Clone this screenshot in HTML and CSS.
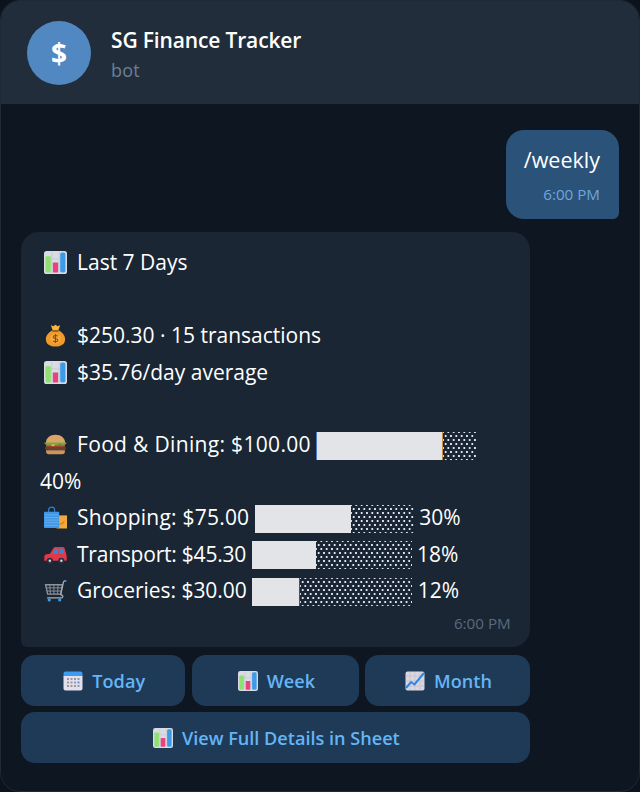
FILE: index.html
```html
<!DOCTYPE html>
<html lang="en">
<head>
<meta charset="utf-8">
<title>SG Finance Tracker</title>
<link rel="stylesheet" href="styles.css">
</head>
<body>
<svg class="defs" width="0" height="0" aria-hidden="true">
  <defs>
    <symbol id="e-chart" viewBox="0 0 22 22">
      <rect x="0" y="0" width="22" height="22" rx="2.5" fill="#d9dce3"/>
      <path d="M7.5 1v20M14.5 1v20M1 7.5h20M1 14.5h20" stroke="#c3c6ce" stroke-width="0.7"/>
      <rect x="1.500" y="5" width="5" height="15.500" rx="1" fill="#8fe070"/>
      <rect x="8.500" y="11" width="5" height="9.500" rx="0.6" fill="#e8437f"/>
      <rect x="15.500" y="1.500" width="5" height="19" rx="1.600" fill="#3c9be8"/>
    </symbol>
    <symbol id="e-bag" viewBox="0 0 22 22">
      <path d="M7.6 6.2C3.8 8.4 1.6 11.6 1.8 15c.2 4.4 4 6.500 9.200 6.500s9-2.100 9.200-6.500c.2-3.400-2-6.600-5.800-8.800z" fill="#ef9a2a"/>
      <path d="M7.6 6.2h6.800l-.6 1.500H8.200z" fill="#a8661a"/>
      <path d="M6.6 1.200l2.400 1 2-1.500 2 1.500 2.400-1-1.600 4.600H8.200z" fill="#f5b63c"/>
      <circle cx="11" cy="14" r="5" fill="#f7a93a"/>
      <path d="M13.200 11.600c-.8-.9-4.200-1-4.300.8-.1 2 4.500 1 4.400 3.200-.1 1.800-3.700 1.700-4.600.6M11 9.600v8.600" fill="none" stroke="#8a4b12" stroke-width="1.100"/>
    </symbol>
    <symbol id="e-burger" viewBox="0 0 22 22">
      <path d="M1.800 9.600C1.800 4.600 5.800 1.600 11 1.600s9.200 3 9.200 8z" fill="#dda468"/>
      <path d="M.6 10.400l3.400 2 3-1.300 4 1.600 4-1.600 3 1.300 3.400-2V9.200H.6z" fill="#6caf3d"/>
      <rect x="2" y="11.400" width="18" height="1.800" fill="#e0493c"/>
      <path d="M6 11h5l-2.400 1.800z" fill="#f4c430"/>
      <rect x="1" y="13.200" width="20" height="3" rx="1.400" fill="#6b4030"/>
      <path d="M2 16.400h18v1.600c0 1.600-1.200 2.400-2.800 2.400H4.800C3.200 20.400 2 19.600 2 18z" fill="#cf9458"/>
    </symbol>
    <symbol id="e-shop" viewBox="0 0 22 22">
      <path d="M4.500 6V3.500C4.500 1.900 5.800 1 7.300 1s2.800.9 2.800 2.500V6" fill="none" stroke="#2f7fd0" stroke-width="1.200"/>
      <rect x="12" y="9" width="10" height="12.500" fill="#f2a93b"/>
      <path d="M14.500 18.500l2-2 1 .8 2-3" fill="none" stroke="#b9701a" stroke-width="0.9"/>
      <rect x="0" y="5.500" width="14.500" height="15.500" rx="0.800" fill="#3f97e6"/>
      <path d="M.5 8.500h13.500M.5 11h13.500M.5 13.500h13.500M.5 16h13.500M.5 18.500h13.500" stroke="#6cb4f0" stroke-width="0.800"/>
    </symbol>
    <symbol id="e-car" viewBox="0 0 22 22">
      <path d="M.3 17v-4c0-1.200 1-1.900 2.400-2.200l3-.6L9 4.700c.4-.6 1-.9 1.700-.9h7.400c.8 0 1.400.5 1.600 1.200l1.700 6.100c.2.600.3 1.300.3 2V17z" fill="#e5364b"/>
      <path d="M7.800 10.200l2.800-4.600h3v4.600zM14.800 5.600h3.600l1.200 4.600h-4.800z" fill="#3b88c3"/>
      <circle cx="5.600" cy="17" r="3" fill="#2a2f38"/>
      <circle cx="5.600" cy="17" r="1.200" fill="#cfd3da"/>
      <circle cx="16.600" cy="17" r="3" fill="#2a2f38"/>
      <circle cx="16.600" cy="17" r="1.200" fill="#cfd3da"/>
    </symbol>
    <symbol id="e-cart" viewBox="0 0 22 22">
      <path d="M1.500 5.500h16l-1.500 9H3.500z" fill="none" stroke="#8f949c" stroke-width="1.300"/>
      <path d="M5.500 5.500l.6 9M9.500 5.500v9M13.500 5.500l-.6 9M2 8.500h15M2.700 11.500h13.800" stroke="#8f949c" stroke-width="0.900"/>
      <path d="M20.500 1.500l-1.800 1-2.700 12.500c1.800.5 2.600 1.700 1.600 2.700-.4.300-1 .4-1.600.4H3" fill="none" stroke="#a9aeb6" stroke-width="1.200"/>
      <path d="M20 1l1.500.2-.4 1.600-1.600-.4z" fill="#3c9be8"/>
      <circle cx="5" cy="20" r="1.500" fill="#3c9be8"/>
      <circle cx="15" cy="20" r="1.500" fill="#3c9be8"/>
    </symbol>
    <symbol id="e-cal" viewBox="0 0 20 20">
      <path d="M2.500 0.500h15c1.100 0 2 .9 2 2v3H.5v-3c0-1.100.9-2 2-2z" fill="#3d9bf0"/>
      <path d="M.5 5h19v12.500c0 1.100-.9 2-2 2h-15c-1.100 0-2-.9-2-2z" fill="#e3dfec"/>
      <g fill="#97979f">
        <rect x="4" y="7" width="2" height="2"/><rect x="7.500" y="7" width="2" height="2"/><rect x="11" y="7" width="2" height="2"/><rect x="14.500" y="7" width="2" height="2"/>
        <rect x="4" y="10.500" width="2" height="2"/><rect x="7.500" y="10.500" width="2" height="2"/><rect x="11" y="10.500" width="2" height="2"/>
        <rect x="4" y="14" width="2" height="2"/><rect x="7.500" y="14" width="2" height="2"/><rect x="11" y="14" width="2" height="2"/>
      </g>
      <rect x="14.500" y="10.500" width="2" height="2" fill="#3d9bf0"/>
      <rect x="14.500" y="14" width="2" height="2" fill="#97979f"/>
    </symbol>
    <symbol id="e-up" viewBox="0 0 20 20">
      <rect x="0.500" y="0.500" width="19" height="19" rx="2" fill="#d9d6e0"/>
      <path d="M5 1v18M10 1v18M15 1v18M1 5h18M1 10h18M1 15h18" stroke="#c0bdc9" stroke-width="0.600"/>
      <path d="M1 17l5-6 3.500 2.500L19 2" fill="none" stroke="#2f86dc" stroke-width="2"/>
    </symbol>
  </defs>
</svg>

<main class="phone">
  <header class="head">
    <div class="avatar">$</div>
    <div class="head-text">
      <div class="title">SG Finance Tracker</div>
      <div class="sub">bot</div>
    </div>
  </header>

  <section class="chat">
    <div class="bubble-user">
      <div class="user-text">/weekly</div>
      <div class="user-time">6:00 PM</div>
    </div>

    <div class="bot-col">
      <article class="bubble-bot">
        <div class="line"><svg class="emoji"><use href="#e-chart"/></svg>Last 7 Days</div>
        <div class="line">&nbsp;</div>
        <div class="line"><svg class="emoji"><use href="#e-bag"/></svg>$250.30 · 15 transactions</div>
        <div class="line"><svg class="emoji"><use href="#e-chart"/></svg>$35.76/day average</div>
        <div class="line">&nbsp;</div>
        <div class="line"><svg class="emoji"><use href="#e-burger"/></svg><span class="lbl-food">Food &amp; Dining: $100.00</span> <span class="bar"><span class="fill f8"></span><span class="rest r2"></span></span> 40%</div>
        <div class="line"><svg class="emoji"><use href="#e-shop"/></svg><span class="lbl-shop">Shopping: $75.00</span> <span class="bar"><span class="fill f6"></span><span class="rest r4"></span></span> 30%</div>
        <div class="line"><svg class="emoji"><use href="#e-car"/></svg><span class="lbl-trans">Transport: $45.30</span> <span class="bar"><span class="fill f4"></span><span class="rest r6"></span></span> 18%</div>
        <div class="line"><svg class="emoji"><use href="#e-cart"/></svg><span class="lbl-groc">Groceries: $30.00</span> <span class="bar"><span class="fill f3"></span><span class="rest r7"></span></span> 12%</div>
        <div class="bot-time">6:00 PM</div>
      </article>

      <div class="btn-row">
        <button class="btn"><svg class="btn-icon"><use href="#e-cal"/></svg>Today</button>
        <button class="btn btn-mid"><svg class="btn-icon"><use href="#e-chart"/></svg>Week</button>
        <button class="btn"><svg class="btn-icon"><use href="#e-up"/></svg>Month</button>
      </div>
      <div class="btn-row">
        <button class="btn"><svg class="btn-icon"><use href="#e-chart"/></svg>View Full Details in Sheet</button>
      </div>
    </div>
  </section>
</main>
</body>
</html>
```

FILE: styles.css
```css
* { box-sizing: border-box; }

html, body {
  margin: 0;
  padding: 0;
  height: 792px;
  background: #0d131c;
  overflow: hidden;
}

body {
  font-family: "Open Sans", "Noto Sans", sans-serif;
  color: #fff;
}

.defs { position: absolute; }

.phone {
  height: 792px;
  border: 1px solid #1f2a37;
  border-radius: 20px;
  background: #0e1621;
  overflow: hidden;
  display: flex;
  flex-direction: column;
}

.head {
  height: 103px;
  flex: none;
  display: flex;
  align-items: center;
  gap: 20px;
  padding: 0 0 0 26px;
  background: #212d3b;
}

.avatar {
  width: 64px;
  height: 64px;
  border-radius: 50%;
  background: #5288c1;
  display: flex;
  align-items: center;
  justify-content: center;
  font-size: 28px;
  font-weight: 700;
}

.head-text { padding-top: 6px; }

.title {
  font-size: 21px;
  line-height: 27px;
  font-weight: 600;
  letter-spacing: -0.15px;
}

.sub {
  font-size: 18px;
  line-height: 30px;
  margin-top: 1px;
  letter-spacing: 0.2px;
  color: #6c7f93;
}

.chat {
  flex: 1;
  display: flex;
  flex-direction: column;
  padding: 26px 20px 0;
}

.bubble-user {
  align-self: flex-end;
  width: 113px;
  height: 89px;
  padding: 15px 19px 0 0;
  background: #2b5278;
  border-radius: 18px 18px 6px 18px;
  text-align: right;
}

.user-text {
  font-size: 21.5px;
  line-height: 30px;
}

.user-time {
  margin-top: 7px;
  font-size: 15.2px;
  line-height: 24px;
  color: #6fa6dc;
}

.bot-col {
  width: 508.7px;
  margin-top: 13px;
  display: flex;
  flex-direction: column;
  gap: 6px;
}

.bubble-bot {
  height: 415px;
  padding: 12.2px 19px 0;
  background: #1a2634;
  border-radius: 18px 18px 18px 6px;
  font-size: 21px;
  line-height: 36.45px;
  margin-bottom: 2px;
}

.line { display: block; }

.lbl-food { letter-spacing: 0.33px; }
.lbl-shop { letter-spacing: 0.22px; }
.lbl-trans { letter-spacing: -0.22px; }
.lbl-groc { letter-spacing: -0.05px; }

.emoji {
  width: 23px;
  height: 23px;
  margin: 0 10px 0 4px;
  vertical-align: -4px;
}

.bar {
  display: inline-flex;
  height: 28px;
  vertical-align: -7.5px;
}

.fill { display: block; height: 28px; background: #e3e4e8; }

.rest {
  display: block;
  height: 28px;
  background-image:
    radial-gradient(circle at center, #dfe6ee 0 1px, transparent 1.3px),
    radial-gradient(circle at center, #dfe6ee 0 1px, transparent 1.3px);
  background-size: 5.33px 8px, 5.33px 8px;
  background-position: 0 0, 2.66px 4px;
}

.f3 { width: 48px; border-right: 1px solid #7a3f3a; }
.f4 { width: 64px; }
.f6 { width: 96px; }
.f8 { width: 127px; border-left: 1px solid #4a78c8; border-right: 1px solid #c98a3a; }
.r2 { width: 33px; }
.r4 { width: 63px; }
.r6 { width: 96px; }
.r7 { width: 112px; }

.bot-time {
  margin-top: 1.8px;
  font-size: 15.2px;
  line-height: 24px;
  text-align: right;
  color: #5a6b7c;
}

.btn-row {
  display: flex;
  gap: 6.7px;
}

.btn {
  flex: 1 1 0;
  height: 51px;
  border: 0;
  border-radius: 14px;
  background: #1f3a56;
  color: #64b5f6;
  font-family: inherit;
  font-size: 18.1px;
  font-weight: 600;
  display: flex;
  align-items: center;
  justify-content: center;
  gap: 9px;
  padding: 0 0 0 2px;
}

.btn-mid { flex-grow: 1.012; }

.btn-icon {
  width: 20px;
  height: 20px;
}
```
